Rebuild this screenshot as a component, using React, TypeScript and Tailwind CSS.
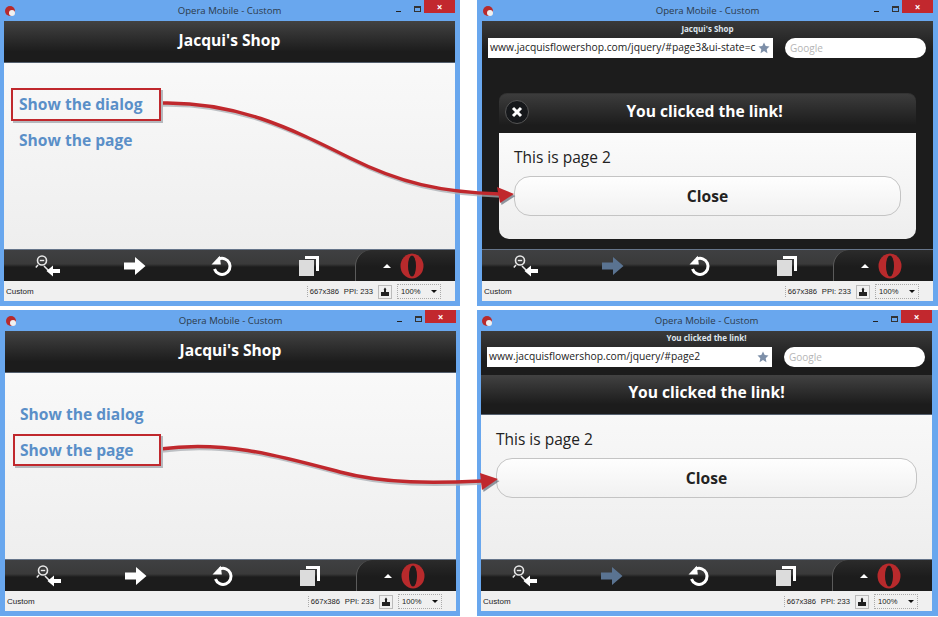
import React from 'react';

const openSans = { fontFamily: '"Open Sans", sans-serif' };

const OperaLogo = () => (
  <svg width="24" height="26" viewBox="0 0 24 26">
    <ellipse cx="12" cy="13" rx="11.5" ry="12.5" fill="#b82a2c" />
    <ellipse cx="12" cy="13" rx="4" ry="10.5" fill="#1c1c1c" />
  </svg>
);

const ZoomIcon = () => (
  <svg width="26" height="24" viewBox="0 0 26 24">
    <circle cx="7" cy="6.5" r="4.5" fill="none" stroke="#e8e8e8" strokeWidth="1.6" />
    <path d="M4.8 6.5h4.4" stroke="#e8e8e8" strokeWidth="1.4" />
    <path d="M3 11 0.8 13.5M9 12l6 6" stroke="#e8e8e8" strokeWidth="1.5" />
    <path d="M25 15h-7v-3.5L11.5 17l6.5 5.500V19h7z" fill="#fff" />
  </svg>
);

const ForwardIcon = ({ disabled }: { disabled?: boolean }) => (
  <svg width="22" height="18" viewBox="0 0 22 18">
    <path d="M0 5.500h11V0l10.500 9L11 18v-5.500H0z" fill={disabled ? '#5a7391' : '#fff'} />
  </svg>
);

const ReloadIcon = () => (
  <svg width="22" height="22" viewBox="0 0 22 22">
    <path d="M7.500 4.200A8 8 0 1 1 3.500 14" fill="none" stroke="#fff" strokeWidth="3" />
    <path d="M0.500 9.500 8.800 0.800l1 8.700z" fill="#fff" />
  </svg>
);

const TabsIcon = () => (
  <svg width="20" height="20" viewBox="0 0 20 20">
    <path d="M6 0h14v15h-3V3H6z" fill="#fff" />
    <rect x="0" y="4" width="15" height="16" fill="#dcdcdc" />
  </svg>
);

const Toolbar = ({ forwardDisabled }: { forwardDisabled?: boolean }) => (
  <div className="flex h-8 bg-[linear-gradient(#3f4042_0%,#3a3a3a_45%,#1c1c1c_55%,#1c1c1c_100%)] border-t border-[#66758a]">
    <div className="flex w-[87px] items-center justify-center"><ZoomIcon /></div>
    <div className="flex w-[87px] items-center justify-center"><ForwardIcon disabled={forwardDisabled} /></div>
    <div className="flex w-[87px] items-center justify-center"><ReloadIcon /></div>
    <div className="flex w-[87px] items-center justify-center"><TabsIcon /></div>
    <div className="ml-[3px] flex flex-1 items-center rounded-tl-[16px] border-l border-[#5b5b5b] bg-[linear-gradient(#2b2b2b,#1c1c1c_55%)]">
      <div className="ml-[27px] h-0 w-0 border-x-[4px] border-b-[4px] border-x-transparent border-b-white" />
      <div className="ml-[9px]"><OperaLogo /></div>
    </div>
  </div>
);

const StatusBar = () => (
  <div className="flex h-5 items-center bg-[#f0f0f0] pl-[2px] pr-[3px] pt-px text-[7.6px] text-[#222]" style={{ fontFamily: '"Liberation Sans", sans-serif' }}>
    <span className="flex-1 text-[8px]">Custom</span>
    <span className="mr-[5px] border-l border-dotted border-[#aaa] pl-[2px]">667x386</span>
    <span className="mr-[5px]">PPI: 233</span>
    <span className="mr-[5px] flex h-[14px] w-[14px] items-center justify-center border border-[#bbb]">
      <svg width="10" height="10" viewBox="0 0 10 10">
        <path d="M1 5h8v4H1zM4 5V2h2v3M3.500 2.500 5 0.500l1.500 2z" fill="#222" />
      </svg>
    </span>
    <span className="mr-[11px] flex h-[15px] w-[44px] items-center justify-between border border-dotted border-[#aaa] px-[3px]">
      100%
      <span className="h-0 w-0 border-x-[3px] border-t-[3px] border-x-transparent border-t-[#111]" />
    </span>
  </div>
);

const Window = ({ className, children, forwardDisabled }: { className: string; children: React.ReactNode; forwardDisabled?: boolean }) => (
  <div className={`flex h-[306px] flex-col bg-[#69a7ee] pb-[5px] ${className}`}>
    <div className="grid h-[21px] w-[451px] grid-cols-[1fr_auto_1fr] items-center">
      <div className="flex items-center pl-[1px]">
        <span className="relative block h-[10px] w-[10px] rounded-full bg-[#b82a2c]">
          <span className="absolute bottom-0 right-0 block h-[6px] w-[6px] rounded-full bg-[#f0f0f0]" />
        </span>
      </div>
      <span className="pt-px text-[9.6px] text-[#2c3a4a]" style={openSans}>Opera Mobile - Custom</span>
      <div className="flex items-center justify-end self-start">
        <span className="mr-[13px] mt-[9px] h-px w-[5px] bg-[#222]" />
        <span className="mr-[3px] mt-[4px] h-[6px] w-[7px] border border-t-2 border-[#333]" />
        <span className="flex h-[13px] w-[31px] items-center justify-center bg-[#c2282e] text-[10px] font-bold leading-none text-white" style={openSans}>×</span>
      </div>
    </div>
    <div className="flex w-[451px] flex-1 flex-col">
      <div className="flex flex-1 flex-col bg-[#1c1c1c]">{children}</div>
      <Toolbar forwardDisabled={forwardDisabled} />
      <StatusBar />
    </div>
  </div>
);

const PageHeader = ({ title, sizeClass }: { title: string; sizeClass: string }) => (
  <div className={`flex items-center justify-center border-b border-[#55606e] bg-[linear-gradient(#424242,#1c1c1c_75%)] text-[15.6px] font-bold text-white ${sizeClass}`} style={openSans}>
    {title}
  </div>
);

const LinkPage = ({ padClass }: { padClass: string }) => (
  <>
    <PageHeader title="Jacqui's Shop" sizeClass="h-[42px] pb-px" />
    <div className={`flex-1 bg-[linear-gradient(#f9f9f9,#eeeeee)] pt-[23px] ${padClass} text-[15.6px] font-bold leading-[36px] text-[#5a8fc8]`} style={openSans}>
      <div>Show the dialog</div>
      <div>Show the page</div>
    </div>
  </>
);

const AddressBar = ({ title, url, titleClass }: { title: string; url: string; titleClass: string }) => (
  <div className="shrink-0 bg-[linear-gradient(#3a3a3a,#1c1c1c_70%)] px-[6px] pb-[8px]" style={openSans}>
    <div className={`flex items-center justify-center pb-[2px] text-[8px] font-bold text-[#dfe6ee] ${titleClass}`}>{title}</div>
    <div className="flex h-5 gap-3">
      <div className="flex w-[285px] items-center bg-white pl-[2px] pr-[3px] text-[10.3px] text-[#222]">
        <span className="flex-1 whitespace-nowrap">{url}</span>
        <svg className="ml-[2px] shrink-0" width="12" height="12" viewBox="0 0 24 24">
          <path d="m12 1 3.400 7.200 7.600 1-5.600 5.300 1.500 7.800L12 18l-6.900 4.300 1.500-7.800L1 9.200l7.600-1z" fill="#7d8fa8" />
        </svg>
      </div>
      <div className="flex w-[141px] items-center rounded-[10px] bg-white pl-[5px] text-[10px] text-[#b5b5b5]">Google</div>
    </div>
  </div>
);

const CloseButton = () => (
  <div className="flex h-10 items-center justify-center rounded-[16px] border border-[#c4c4c4] bg-[linear-gradient(#fefefe,#f1f1f1)] pt-px text-[15.6px] font-bold text-[#222]" style={openSans}>
    Close
  </div>
);

const DialogPage = () => (
  <>
    <AddressBar title="Jacqui's Shop" titleClass="h-[17px]" url="www.jacquisflowershop.com/jquery/#page3&ui-state=c" />
    <div className="flex-1 px-[17px] pt-[27px]" style={openSans}>
      <div className="flex h-10 items-center rounded-t-[8px] border-t border-[#333] bg-[linear-gradient(#3c3c3c,#1c1c1c_80%)] pb-[3px] pl-[6px] pr-[36px]">
        <span className="flex h-[24px] w-[24px] shrink-0 items-center justify-center rounded-full border border-[#555] bg-[#16181b]">
          <svg width="12" height="12" viewBox="0 0 12 12">
            <path d="M2 2l8 8M10 2l-8 8" stroke="#fff" strokeWidth="3" />
          </svg>
        </span>
        <span className="flex-1 text-center text-[15.6px] font-bold text-white">You clicked the link!</span>
      </div>
      <div className="h-[106px] rounded-b-[10px] bg-[linear-gradient(#fbfbfb,#eeeeee)] px-[15px] pt-[13px] text-[15.5px] text-[#222]">
        <div className="mb-[8px] leading-[22px]">This is page 2</div>
        <CloseButton />
      </div>
    </div>
  </>
);

const FullPage = () => (
  <>
    <AddressBar title="You clicked the link!" titleClass="h-4" url="www.jacquisflowershop.com/jquery/#page2" />
    <PageHeader title="You clicked the link!" sizeClass="h-10 pb-[3px]" />
    <div className="flex-1 bg-[linear-gradient(#f8f8f8,#eeeeee)] px-[15px] pt-[13px] text-[15.5px] text-[#222]" style={openSans}>
      <div className="mb-[8px] leading-[22px]">This is page 2</div>
      <CloseButton />
    </div>
  </>
);

const Arrows = () => (
  <svg className="pointer-events-none absolute inset-0" width="938" height="617" viewBox="0 0 938 617" fill="none">
    <g transform="translate(1.500 2)" opacity="0.75">
      <path d="M160 103C235 101 290 128 350 158C400 183 440 192 500 194" stroke="#a9adb3" strokeWidth="3.500" />
      <path d="M160 449C225 440 280 456 340 472C385 484 435 483 482 481" stroke="#a9adb3" strokeWidth="3.500" />
      <path d="M497 187 514 194 500 203z" fill="#6d7682" />
      <path d="M480 473 498 479 482 490z" fill="#6d7682" />
    </g>
    <path d="M160 103C235 101 290 128 350 158C400 183 440 192 500 194" stroke="#c0282d" strokeWidth="3.500" />
    <path d="M160 449C225 440 280 456 340 472C385 484 435 483 482 481" stroke="#c0282d" strokeWidth="3.500" />
    <path d="M497 187 514 194 500 203z" fill="#c0282d" />
    <path d="M480 473 498 479 482 490z" fill="#c0282d" />
  </svg>
);

const App = () => (
  <div className="relative h-[617px] w-[938px] overflow-hidden bg-white">
    <div className="grid grid-cols-[460px_461px] gap-x-[17px] gap-y-1">
      <Window className="pl-1"><LinkPage padClass="pl-[15px]" /></Window>
      <Window className="pl-[5px]" forwardDisabled><DialogPage /></Window>
      <Window className="pl-[5px]"><LinkPage padClass="pl-[15px]" /></Window>
      <Window className="pl-1" forwardDisabled><FullPage /></Window>
    </div>
    <Arrows />
    <div className="absolute left-[11px] top-[88px] h-[33px] w-[150px] border-2 border-[#c0282d] shadow-[2px_2px_0_#b5b8bd]" />
    <div className="absolute left-[13px] top-[434px] h-[32px] w-[148px] border-2 border-[#c0282d] shadow-[2px_2px_0_#b5b8bd]" />
  </div>
);

export default App;
